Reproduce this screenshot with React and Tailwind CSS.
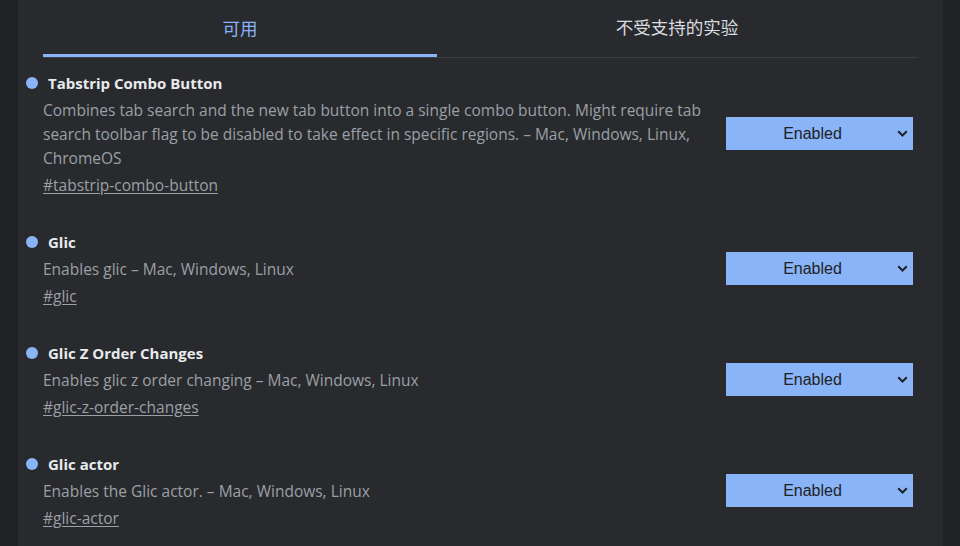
import React from "react";

const flags = [
  {
    title: "Tabstrip Combo Button",
    desc: "Combines tab search and the new tab button into a single combo button. Might require tab search toolbar flag to be disabled to take effect in specific regions. – Mac, Windows, Linux, ChromeOS",
    link: "#tabstrip-combo-button",
  },
  { title: "Glic", desc: "Enables glic – Mac, Windows, Linux", link: "#glic" },
  {
    title: "Glic Z Order Changes",
    desc: "Enables glic z order changing – Mac, Windows, Linux",
    link: "#glic-z-order-changes",
  },
  {
    title: "Glic actor",
    desc: "Enables the Glic actor. – Mac, Windows, Linux",
    link: "#glic-actor",
  },
];

function Select() {
  return (
    <div className="relative flex h-[33px] w-[187px] shrink-0 items-center bg-[#8ab4f8] text-[#202124] font-['Liberation_Sans',Arial,sans-serif] text-[16px]">
      <span className="flex-1 pl-[8px] text-center">Enabled</span>
      <svg width="11" height="7" viewBox="0 0 11 7" className="mr-[5px] ml-[6px]">
        <path d="M1.2 1.2 L5.5 5.5 L9.8 1.2" fill="none" stroke="#202124" strokeWidth="2" />
      </svg>
    </div>
  );
}

function Flag({ f }) {
  return (
    <div className="flex items-center pr-[4px]">
      <div className="flex-1 pr-[24px]">
        <div className="-ml-[17px] flex h-[26px] items-center gap-[10px]">
          <span className="h-[12px] w-[12px] shrink-0 rounded-full bg-[#8ab4f8]" />
          <span className="text-[15px] font-bold text-[#e8eaed]">{f.title}</span>
        </div>
        <p className="mt-[2px] text-[15.5px] leading-[24px] text-[#9aa0a6]">{f.desc}</p>
        <a className="mt-[3px] block text-[15.5px] leading-[24px] text-[#9aa0a6] underline underline-offset-2">{f.link}</a>
      </div>
      <Select />
    </div>
  );
}

export default function App() {
  return (
    <div className="flex h-[546px] w-[960px] overflow-hidden bg-[#202124] px-[17px] pl-[18px] font-['Open_Sans','Noto_Sans_CJK_SC',sans-serif]">
      <div className="flex-1 bg-[#292a2d] pl-[25px] pr-[26px]">
        <div className="flex border-b border-[#3c4043]">
          <div className="flex h-[57px] w-[394px] items-center justify-center border-b-[3px] border-[#8ab4f8] pt-[3px] text-[17.5px] text-[#8ab4f8] font-['Noto_Sans_CJK_SC',sans-serif]">
            可用
          </div>
          <div className="flex h-[57px] flex-1 items-center justify-center pb-[3px] text-[17.5px] text-[#dadce0] font-['Noto_Sans_CJK_SC',sans-serif]">
            不受支持的实验
          </div>
        </div>
        <div className="flex flex-col gap-[32px] pt-[12px]">
          {flags.map((f) => (
            <Flag key={f.link} f={f} />
          ))}
        </div>
      </div>
    </div>
  );
}
